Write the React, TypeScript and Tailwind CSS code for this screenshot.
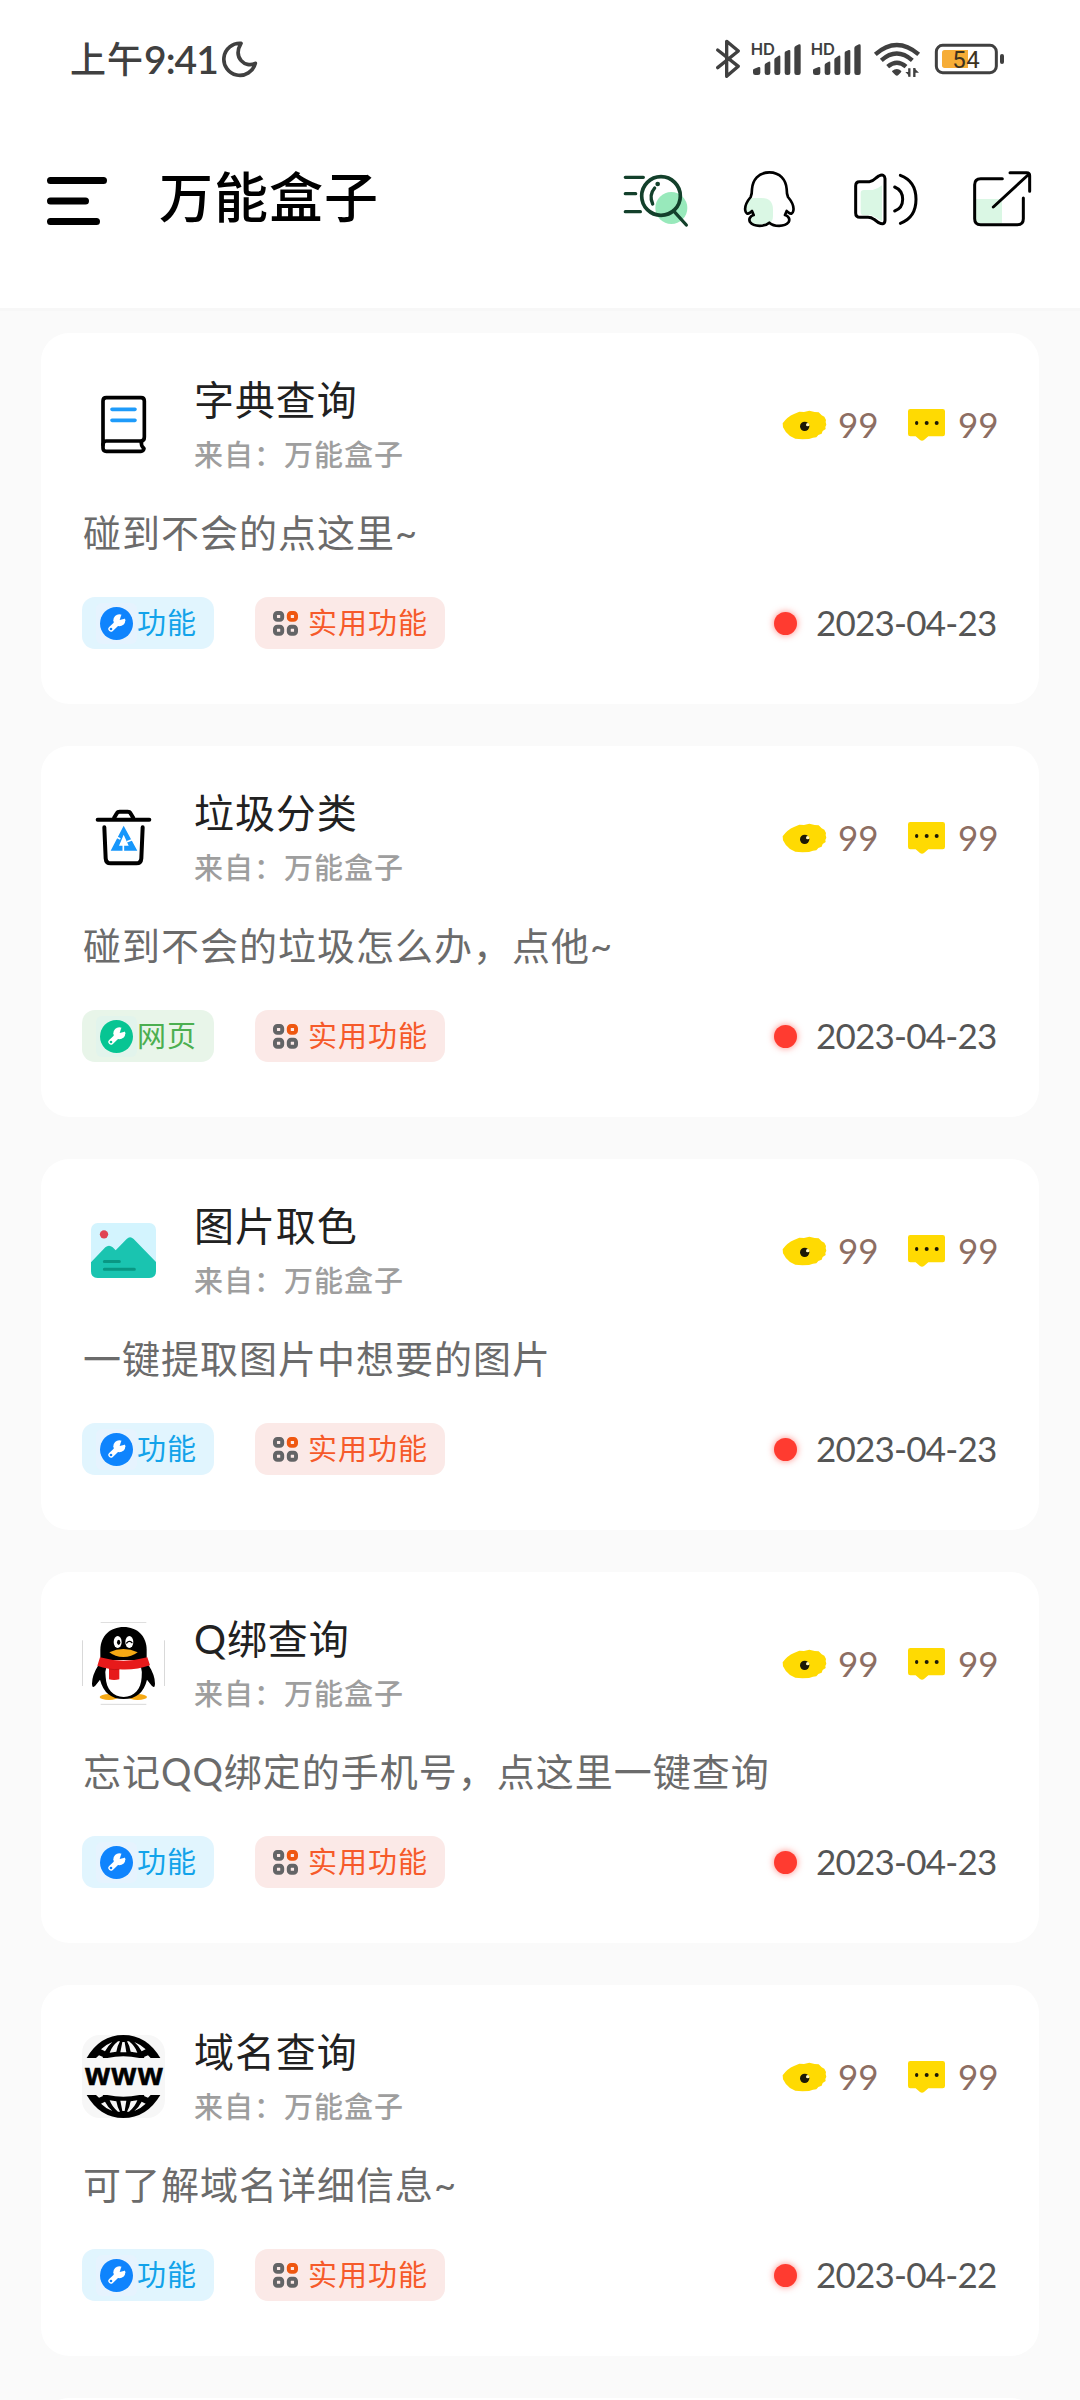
import React from 'react';
import { clsx } from 'clsx';

type TagKind = 'feature' | 'web';

interface ToolItem {
  title: string;
  description: string;
  kind: TagKind;
  date: string;
  icon: React.ReactNode;
}

/* ---------- status bar ---------- */

function Signal() {
  return (
    <svg viewBox="450 114 156 126" className="h-[42px] w-[52px]" fill="#404040">
      <text
        x="452"
        y="165"
        fontSize="47"
        fontWeight="600"
        fontFamily="Inter, sans-serif"
        textLength="73"
        lengthAdjust="spacingAndGlyphs"
      >
        HD
      </text>
      <path d="M459 211q0-4 4-5l13-5q5-1 5 4v13q0 7-7 7h-8q-7 0-7-7z" />
      <path d="M494 196q0-4 4-6l8-5q5-2 5 3v30q0 7-7 7h-3q-7 0-7-7z" />
      <path d="M523 179q0-4 4-6l9-6q5-2 5 3v48q0 7-7 7h-4q-7 0-7-7z" />
      <path d="M554 159q0-4 4-5l8-4q5-1 5 3v65q0 7-7 7h-3q-7 0-7-7z" />
      <path d="M583 144q0-5 5-7l9-4q5-1 5 4v81q0 7-7 7h-5q-7 0-7-7z" />
    </svg>
  );
}

function StatusBar() {
  return (
    <div className="flex h-[117px] items-center justify-between pr-[75px] pl-[70px] text-[#404040]">
      <div className="flex items-center">
        <span className="text-[36px] leading-[42px] font-medium tracking-[1px]">上午</span>
        <span className="w-[77px] text-[39px] leading-[42px] font-semibold tracking-[-1px]">9:41</span>
        <svg viewBox="644 114 111 126" className="ml-px h-[42px] w-[37px]" fill="none" stroke="#404040" strokeWidth="11" strokeLinejoin="round">
          <path d="M701 130a48 48 0 1 0 43 60C713 205 676 173 701 130z" />
        </svg>
      </div>
      <div className="flex items-center">
        <svg viewBox="342 114 78 126" className="h-[42px] w-[26px]" fill="none" stroke="#404040" strokeWidth="10" strokeLinecap="round" strokeLinejoin="round">
          <path d="M350 150l62 49-35 30V124l35 29-62 50" />
        </svg>
        <div className="ml-[9px] flex">
          <Signal />
        </div>
        <div className="ml-[8px] flex">
          <Signal />
        </div>
        <svg viewBox="819 114 144 126" className="ml-[11px] h-[42px] w-[48px]" fill="none" stroke="#404040" strokeWidth="13">
          <path d="M826 163q64-56 130 0M844 181q46-41 93 0M863 200q28-24 55 0" />
          <path d="M876 213q15-12 28 0 1 2-3 6l-6 6q-4 4-9 0l-6-6q-5-4-4-6z" fill="#404040" stroke="none" />
          <path d="M928 205v25M943 231v-27" strokeWidth="7" />
          <path d="M930 230l-14-14h14zM942 204l15 14h-15z" fill="#404040" stroke="none" />
        </svg>
        <svg viewBox="1002 114 213 126" className="ml-[13px] h-[42px] w-[71px]">
          <rect x="1009" y="136" width="180" height="82" rx="19" fill="none" stroke="#404040" strokeWidth="9" />
          <path d="M1034 150h70v54h-70q-8 0-8-8v-38q0-8 8-8z" fill="#f6ad37" />
          <rect x="1200" y="162" width="12" height="30" rx="6" fill="#404040" />
          <text x="1057" y="204" fontSize="72" fontWeight="400" fontFamily="Roboto, sans-serif" fill="#3d3320" textLength="82">
            54
          </text>
        </svg>
      </div>
    </div>
  );
}

/* ---------- header ---------- */

function Header() {
  return (
    <header className="flex h-[191px] items-center pr-[47px] pb-[25px] pl-[46px]">
      <svg viewBox="0 0 62 52" className="h-[52px] w-[62px]" stroke="#000" strokeWidth="7" strokeLinecap="round">
        <path d="M4.500 6.500h53M4.500 27h35M4.500 47.500h46" />
      </svg>
      <h1 className="ml-[51px] pb-[4px] text-[54px] leading-[60px] font-medium tracking-[1px] text-black">万能盒子</h1>

      <div className="ml-auto flex items-center">
        {/* search */}
        <svg viewBox="66 504 210 192" className="h-[64px] w-[70px]" fill="none" stroke="#13402b" strokeWidth="10" strokeLinecap="round">
          <circle cx="214" cy="624" r="48" fill="#98e9bb" stroke="none" />
          <path d="M76 532h54M76 581h31M76 635h45" />
          <circle cx="183" cy="588" r="58" strokeWidth="11" />
          <path d="M222 634l37 41M158 612q-12-27 6-48" />
          <circle cx="173" cy="552" r="7" fill="#13402b" stroke="none" />
        </svg>
        {/* community */}
        <svg viewBox="426 504 168 192" className="ml-[50px] h-[64px] w-[56px]" fill="none">
          <path d="M446 594h38q35 0 35 35v19q0 20-14 20l-28 8q-30-2-26-22l8-12-22-2q-3-26 9-46z" fill="#daf7e4" />
          <path
            d="M508 517c-33 0-50 24-52 50q0 14-4 24c-10 12-19 27-16 41q3 14 14 6l6-5 5 12c-10 3-16 12-11 21 12 16 45 14 58 2 13 12 46 14 58-2 5-9-1-18-11-21l5-12 6 5q11 8 14-6c3-14-6-29-16-41q-4-10-4-24c-2-26-19-50-52-50z"
            stroke="#000"
            strokeWidth="8"
            strokeLinejoin="round"
          />
        </svg>
        {/* notice */}
        <svg viewBox="756 504 204 192" className="ml-[54px] h-[64px] w-[68px]" fill="none" strokeLinecap="round">
          <path d="M782 580q0-10 10-10h26q14-2 28-14v108l-32-18h-22q-10 0-10-10z" fill="#daf7e4" />
          <path d="M778 545h30q10-1 20-11l8-6q18-8 19 8v125q-1 16-19 7l-14-10q-8-6-18-6h-24q-13 0-13-13v-81q0-13 11-13z" stroke="#000" strokeWidth="9" strokeLinejoin="round" />
          <path d="M884 561q24 10 24 37t-24 35M901 526q47 17 47 72t-47 72" stroke="#000" strokeWidth="9" />
        </svg>
        {/* share */}
        <svg viewBox="1113 504 186 192" className="ml-[51px] h-[64px] w-[62px]" fill="none" strokeLinecap="round">
          <path d="M1128 597h70q8 0 8 8v65h-78z" fill="#daf7e4" />
          <path d="M1207 536h-65q-18 0-18 18v102q0 18 18 18h110q18 0 18-18v-62M1230 518h50q9 0 9 9v47M1180 621l104-96" stroke="#000" strokeWidth="9" />
        </svg>
      </div>
    </header>
  );
}

/* ---------- tool icons ---------- */

function BookIcon() {
  return (
    <svg viewBox="156 189 249 249" className="size-full" fill="none" stroke="#000" strokeWidth="11" strokeLinejoin="round" strokeLinecap="round">
      <path d="M229 233h104q10 0 10 10v108q0 12-10 12H229q-10 0-10 12V243q0-10 10-10z" />
      <path d="M219 372v12q0 10 10 10h104q7 0 9-8-10-10-8-22" />
      <path d="M246 268h69M246 301h69" stroke="#1e9bfa" strokeWidth="11" />
    </svg>
  );
}

function TrashIcon() {
  return (
    <svg viewBox="156 168 249 249" className="size-full" fill="none" stroke="#000" strokeWidth="12" strokeLinecap="round" strokeLinejoin="round">
      <path d="M203 239h155M252 234l9-15q2-4 8-4h24q6 0 8 4l9 15M223 262l4 93q1 15 15 15h77q14 0 15-15l4-93" />
      <path
        d="M281 257l41 75h-80zM281 284l-14 33h29z"
        fill="#1797fb"
        fillRule="evenodd"
        stroke="none"
      />
      <path d="M255 289l16 8M291 305l15-6M280 314v20" stroke="#fff" strokeWidth="5" strokeLinecap="butt" />
    </svg>
  );
}

function PictureIcon() {
  return (
    <svg viewBox="156 177 249 249" className="size-full">
      <rect x="183" y="219" width="195" height="165" rx="20" fill="#d3f4fe" />
      <path d="M183 337l43-45q11-10 22 0l9 9 33-34q10-10 21 0l67 69v28q0 20-20 20H203q-20 0-20-20z" fill="#1ac4b0" />
      <circle cx="222" cy="253" r="12.5" fill="#e04453" />
      <path d="M223 334.500h45M223 358h90" stroke="#099783" strokeWidth="9" strokeLinecap="round" />
    </svg>
  );
}

function PenguinIcon() {
  return (
    <svg viewBox="156 186 249 249" className="size-full">
      <path d="M212 187h137M212 433h137M157.500 241v137M403.500 241v137" stroke="#d9d9d9" strokeWidth="3" />
      <ellipse cx="237" cy="411" rx="28" ry="9" fill="#f6a914" />
      <ellipse cx="323" cy="411" rx="28" ry="9" fill="#f6a914" />
      <path d="M205 316q-19 30-19 55 1 20 14 1l10-13q15 58 71 58t70-58l10 13q13 19 14-1 0-25-19-55z" />
      <path d="M211 300v-30c0-42 30-69 70-69s69 27 69 69v30z" />
      <path d="M229 322q-5 13-2 30c2 36 22 59 54 59s52-23 54-59q2-17-2-30z" fill="#fff" />
      <ellipse cx="263" cy="246" rx="12" ry="18" fill="#fff" />
      <ellipse cx="298" cy="246" rx="12" ry="18" fill="#fff" />
      <ellipse cx="266" cy="247" rx="5" ry="8" />
      <path d="M290 249q8-9 16-1" fill="none" stroke="#000" strokeWidth="4" strokeLinecap="round" />
      <path d="M238 277q42-20 85 0-18 14-43 14t-42-14z" fill="#f6a914" />
      <path d="M210 292q70 20 142 0l8 24q-42 15-92 12v30q-16 4-31 0v-32q-20-3-35-9z" fill="#e71a1b" />
      <path d="M238 327q14 3 30 1" stroke="#b01012" strokeWidth="2" fill="none" />
    </svg>
  );
}

// one cap of the globe, the lower one is the same shape mirrored
function GlobeCap() {
  return (
    <>
      <path d="M170 264q40-69 110-69t111 69z" />
      <g fill="#f7f7f7">
        <path d="M247 216q-20 8-34 22l12 6q8-16 22-28zM313 216q20 8 34 22l-12 6q-8-16-22-28z" />
        <path d="M264 214q-18 14-25 34l20-3q3-18 11-31zM297 214q18 14 25 34l-20-3q-3-18-11-31zM277 216l-6 31h18l-5-31z" />
        <path d="M198 264l9-8 12 5-1 3zM362 264l-8-8-12 5 1 3zM232 264q48-11 96 0z" />
      </g>
    </>
  );
}

function GlobeIcon() {
  return (
    <svg viewBox="156 195 249 249" className="size-full bg-[#f7f7f7]">
      <GlobeCap />
      <g transform="matrix(1 0 0 -1 0 639)">
        <GlobeCap />
      </g>
      <text x="166" y="345" fontSize="95" fontWeight="700" fontFamily="Liberation Sans, sans-serif" letterSpacing="5" stroke="#000" strokeWidth="2">
        www
      </text>
    </svg>
  );
}

/* ---------- card parts ---------- */

function EyeIcon() {
  return (
    <svg viewBox="246 261 135 96" className="h-[32px] w-[45px]">
      <path
        d="M248 304q14-20 34-28l16-7 14 1 16-4 16 4 12 1 9 9 8 4 5 10-1 6 2 8-3 7 1 6-9 6-3 8-10 4-6 7-10 1-12 4-20 1-21-2-16-8q-14-10-21-26z"
        fill="#ffda02"
      />
      <circle cx="314" cy="313" r="14" fill="#1c1806" />
      <circle cx="323" cy="308" r="5" fill="#fff6c0" />
    </svg>
  );
}

function CommentIcon() {
  return (
    <svg viewBox="621 261 117 102" className="h-[34px] w-[39px]">
      <path d="M631 264h97q7 0 7 7v68q0 7-7 7h-43l-13 11q-6 5-12 0l-13-11h-16q-7 0-7-7v-68q0-7 7-7z" fill="#ffda02" />
      <g fill="#1c1806">
        <ellipse cx="650" cy="306" rx="5" ry="6" />
        <ellipse cx="680" cy="306" rx="6" ry="6" />
        <ellipse cx="710" cy="306" rx="6" ry="6" />
      </g>
    </svg>
  );
}

function WrenchBadge({ kind }: { kind: TagKind }) {
  const fill = kind === 'web' ? '#07c593' : '#0f84fd';
  return (
    <span className={clsx('flex size-[41px] items-center justify-center rounded-[6px]', kind === 'web' ? 'bg-[#e2f4ec]' : 'bg-[#e6f3fe]')}>
      <svg viewBox="210 858 99 99" className="size-[33px]">
        <circle cx="259.500" cy="907.500" r="49.500" fill={fill} />
        <path d="M243 924l24-23" stroke="#fff" strokeWidth="16" strokeLinecap="round" />
        <circle cx="268" cy="898" r="18" fill="#fff" />
        <path d="M269 897l4-13 6-12 16 4-3 14-11 4z" fill={fill} />
        <circle cx="243" cy="924" r="4" fill={fill} />
      </svg>
    </span>
  );
}

function GridIcon() {
  return (
    <svg viewBox="729 870 76 76" className="size-[25px]" fill="none" stroke="#636466" strokeWidth="12">
      <rect x="735" y="876" width="22" height="21" rx="7" />
      <rect x="777" y="876" width="22" height="21" rx="7" stroke="#ef5710" />
      <rect x="735" y="918" width="22" height="21" rx="7" />
      <rect x="777" y="918" width="22" height="21" rx="7" />
    </svg>
  );
}

function ToolCard({ item }: { item: ToolItem }) {
  return (
    <article className="h-[371px] shrink-0 rounded-[28px] bg-white pt-[38px] pr-[42px] pl-[41px]">
      <div className="flex h-[107px] items-center">
        <div className="size-[83px] overflow-hidden rounded-[18px]">{item.icon}</div>
        <div className="ml-[29px]">
          <h2 className="text-[40px] leading-[59px] tracking-[0.9px] text-[#212121]">{item.title}</h2>
          <p className="text-[29px] leading-[49px] font-medium tracking-[1px] text-[#9e9e9e]">来自：万能盒子</p>
        </div>
        <div className="ml-auto flex items-center text-[35px] leading-[40px] text-[#8d6e63]">
          <EyeIcon />
          <span className="ml-[11px] w-[40px] pb-[2px]">99</span>
          <div className="mr-[12px] ml-[29px]">
            <CommentIcon />
          </div>
          <span className="w-[39px] pb-[2px]">99</span>
        </div>
      </div>

      <p className="mt-[27px] pl-px text-[38px] leading-[55px] tracking-[1px] text-[#6b6b6b]">{item.description}</p>

      <div className="mt-[37px] flex h-[52px] items-center text-[29px] tracking-[1px]">
        <div
          className={clsx(
            'flex h-full w-[132px] items-center rounded-[13px] pl-[14px]',
            item.kind === 'web' ? 'bg-[#e8f5e9] text-[#4caf50]' : 'bg-[#e1f5fe] text-[#12a3ea]'
          )}
        >
          <WrenchBadge kind={item.kind} />
          <span className="pb-px">{item.kind === 'web' ? '网页' : '功能'}</span>
        </div>
        <div className="ml-[41px] flex h-full w-[190px] items-center rounded-[13px] bg-[#fbe9e7] pl-[18px] text-[#f65a2a]">
          <GridIcon />
          <span className="ml-[10px] pb-px">实用功能</span>
        </div>
        <div className="ml-auto flex items-center">
          <span className="size-[23px] rounded-full bg-[#ff3b30] shadow-[0_0_7px_rgba(255,59,48,0.6)]" />
          <span className="ml-[19px] w-[181px] pb-[2px] text-[35px] tracking-[-0.8px] whitespace-nowrap text-[#555]">{item.date}</span>
        </div>
      </div>
    </article>
  );
}

const tools: ToolItem[] = [
  { title: '字典查询', description: '碰到不会的点这里~', kind: 'feature', date: '2023-04-23', icon: <BookIcon /> },
  { title: '垃圾分类', description: '碰到不会的垃圾怎么办，点他~', kind: 'web', date: '2023-04-23', icon: <TrashIcon /> },
  { title: '图片取色', description: '一键提取图片中想要的图片', kind: 'feature', date: '2023-04-23', icon: <PictureIcon /> },
  { title: 'Q绑查询', description: '忘记QQ绑定的手机号，点这里一键查询', kind: 'feature', date: '2023-04-23', icon: <PenguinIcon /> },
  { title: '域名查询', description: '可了解域名详细信息~', kind: 'feature', date: '2023-04-22', icon: <GlobeIcon /> },
];

export default function App() {
  return (
    <div className="flex h-[2400px] w-[1080px] flex-col overflow-hidden bg-[#fafafa] font-['Lato','Noto_Sans_CJK_SC',sans-serif]">
      <div className="h-[308px] shrink-0 bg-white">
        <StatusBar />
        <Header />
      </div>
      <div className="h-[3px] shrink-0 bg-[#f7f7f7]" />
      <main className="flex flex-col gap-[42px] px-[41px] pt-[22px]">
        {tools.map((item) => (
          <ToolCard key={item.title} item={item} />
        ))}
        {/* top edge of the next card */}
        <div className="h-[371px] shrink-0 rounded-[28px] bg-white" />
      </main>
    </div>
  );
}
